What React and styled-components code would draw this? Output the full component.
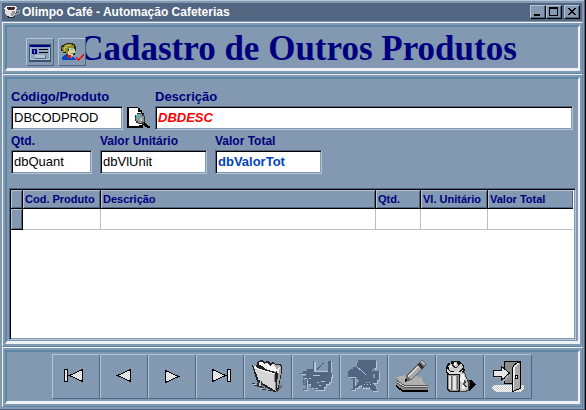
import React from "react";
import styled, { createGlobalStyle } from "styled-components";

const c = {
  face: "#8299b1",
  light: "#b4c6d6",
  dark: "#526581",
  teal: "#5a88a4",
  white: "#eef2f6",
  navy: "#00007f",
};

const GlobalStyle = createGlobalStyle`
  * { box-sizing: border-box; }
  body { margin: 0; background: ${c.face}; font-family: "Liberation Sans", Arial, sans-serif; }
`;

const Window = styled.main`
  min-height: 100vh;
  display: flex;
  flex-direction: column;
  padding: 3px 3px 3px 2px;
  background: ${c.face};
  box-shadow: inset -1px 0 0 #000, inset -2px -1px 0 ${c.dark}, inset 0 1px 0 ${c.light};
`;

const TitleBar = styled.header`
  display: flex;
  align-items: center;
  height: 18px;
  margin: 0 1px 1px 0;
  padding: 0 2px 0 1px;
  background: ${c.dark};
  color: #fff;
`;

const Caption = styled.span`
  flex: 1;
  padding-left: 2px;
  font-size: 12px;
  font-weight: bold;
  line-height: 16px;
  white-space: nowrap;
`;

const WindowButton = styled.button`
  width: 16px;
  height: 14px;
  padding: 0;
  border: 1px solid;
  border-color: ${c.light} #000 #000 ${c.light};
  background: ${c.face};
  box-shadow: inset -1px -1px 0 ${c.dark};
  margin-left: ${(p) => (p.$apart ? "2px" : "0")};
  svg { display: block; }
`;

const Panel = styled.section`
  display: flex;
  flex: ${(p) => (p.$grow ? "1" : "none")};
  padding: 2px;
  border: 1px solid;
  border-color: ${c.white} ${c.teal} ${c.teal} ${c.white};
`;

const Frame = styled.div`
  flex: 1;
  min-width: 0;
  display: flex;
  flex-direction: column;
  border-style: solid;
  border-width: 2px 2px 3px 2px;
  border-color: ${c.teal} ${c.white} ${c.white} ${c.teal};
`;

const Heading = styled(Frame)`
  position: relative;
  height: 46px;
  align-items: center;
  justify-content: center;
`;

const Title = styled.h1`
  margin: 0;
  padding: 2px 0 0 10px;
  color: ${c.navy};
  font-family: "Liberation Serif", "Times New Roman", serif;
  font-size: 35px;
  line-height: 40px;
  font-weight: bold;
  white-space: nowrap;
`;

const HeadingTools = styled.div`
  position: absolute;
  left: 19px;
  top: 11px;
  display: flex;
  gap: 4px;
`;

const RaisedButton = styled.button`
  display: grid;
  place-items: center;
  padding: 0;
  border: 1px solid;
  border-color: ${c.light} ${c.dark} ${c.dark} ${c.light};
  background: ${c.face};
  svg { display: block; }
`;

const SmallButton = styled(RaisedButton)`
  width: 28px;
  height: 28px;
`;

const Body = styled(Frame)`
  padding: 11px 2px 1px 2px;
`;

const Form = styled.form`
  display: flex;
  flex-direction: column;
  gap: 4px;
  padding: 0 3px 0 2px;
`;

const FieldRow = styled.div`
  display: flex;
  align-items: flex-end;
  gap: ${(p) => p.$gap};
`;

const Field = styled.label`
  display: flex;
  flex-direction: column;
  gap: 2px;
  ${(p) => (p.$width ? `width: ${p.$width};` : "flex: 1; min-width: 0;")}
  color: ${c.navy};
  font-size: ${(p) => (p.$small ? "12px" : "13px")};
  line-height: 14px;
  font-weight: bold;
  white-space: nowrap;
`;

const FieldName = styled.span`
  display: block;
`;

const Input = styled.input`
  width: 100%;
  height: 24px;
  padding: 0 2px 1px;
  border: 1px solid;
  border-color: ${c.dark} ${c.light} ${c.light} ${c.dark};
  border-radius: 0;
  outline: none;
  background: #fff;
  box-shadow: inset 1px 1px 0 #000, inset -1px -1px 0 ${c.face};
  color: ${(p) => p.$color || "#000"};
  font-family: "Liberation Sans", Arial, sans-serif;
  font-size: 13px;
  font-weight: ${(p) => (p.$bold ? "bold" : "normal")};
  font-style: ${(p) => (p.$italic ? "italic" : "normal")};
`;

const SearchButton = styled.button`
  width: 26px;
  height: 24px;
  padding: 0;
  border: 0;
  background: none;
  svg { display: block; }
`;

const GridBox = styled.div`
  flex: 1;
  margin-top: 14px;
  padding: 1px 2px 1px 1px;
  border: 1px solid;
  border-color: ${c.dark} ${c.light} ${c.light} ${c.dark};
  background: #fff;
  box-shadow: inset 1px 1px 0 #000, inset -1px -1px 0 ${c.face};
`;

const Table = styled.table`
  width: 100%;
  table-layout: fixed;
  border-collapse: separate;
  border-spacing: 0;
`;

const Col = styled.col`
  width: ${(p) => p.$width || "auto"};
`;

const HeadCell = styled.th`
  height: 19px;
  padding: 0 0 0 2px;
  border-right: ${(p) => (p.$last ? "0" : "1px solid #000")};
  border-bottom: 1px solid #000;
  background: ${c.face};
  box-shadow: inset 1px 1px 0 ${c.light}, inset -1px -1px 0 ${c.dark};
  color: ${c.navy};
  font-size: 11px;
  line-height: 16px;
  text-align: left;
  white-space: nowrap;
`;

const RowMark = styled(HeadCell)`
  height: 21px;
`;

const Cell = styled.td`
  height: 21px;
  padding: 0;
  border-right: ${(p) => (p.$last ? "0" : "1px solid #c0c0c0")};
  border-bottom: 1px solid #c0c0c0;
`;

const Toolbar = styled(Frame)`
  flex-direction: row;
  justify-content: center;
  padding: 2px 2px 2px 0;
`;

const ToolButton = styled(RaisedButton)`
  width: 48px;
  height: 45px;
`;

const Art = ({ w, h, box, children }) => (
  <svg width={w} height={h} viewBox={box || `0 0 ${w} ${h}`} shapeRendering="crispEdges" aria-hidden="true">
    {children}
  </svg>
);

const Tool = ({ name, disabled, children }) => (
  <ToolButton type="button" aria-label={name} disabled={disabled}>
    <Art w={46} h={43} box="1 1 46 43">
      <defs>
        <pattern id="dither" width="2" height="2" patternUnits="userSpaceOnUse">
          <rect width="2" height="2" fill="#fff" />
          <rect width="1" height="1" fill="#c8ccd0" />
          <rect x="1" y="1" width="1" height="1" fill="#c8ccd0" />
        </pattern>
      </defs>
      {children}
    </Art>
  </ToolButton>
);

const arrowStyle = { fill: "url(#dither)", stroke: "#000", strokeWidth: 1 };
const LeftArrow = ({ x }) => <path d={`M${x} 21.5l13-6v12z`} {...arrowStyle} />;
const RightArrow = ({ x, y }) => <path d={`M${x} ${y}l13 6-13 6z`} {...arrowStyle} />;

const CupIcon = () => (
  <Art w={17} h={14}>
    <path d="M2 4h11v3l-2 4-2 1H6l-3-2-1-3z" fill="#ddd" />
    <path d="M1 3l2-2h9l2 2-1 2-3 1H5L2 5z" fill="#eee" />
    <path d="M3 3l2-1h6l1 1-2 2H5z" fill="#432820" />
    <path d="M13 5h3v3l-4 2" fill="none" stroke="#aaa" />
    <path d="M9 6h3v2l-2 3H8z" fill="#9a9490" />
    <path d="M3 11h2l1 1h4l2-1v1l-2 1H5z" fill="#282828" />
  </Art>
);

const CardIcon = () => (
  <Art w={26} h={26}>
    <rect x="2" y="5" width="22" height="18" fill="#395170" />
    <rect x="3" y="6" width="20" height="15" fill="#b4c6d6" />
    <rect x="3" y="6" width="20" height="2" fill="#000080" />
    <rect x="4" y="8" width="18" height="12" fill="#8ba3bb" />
    <path d="M5 10h5v5H5z M7 11v3h1v-3z" fill="#000080" fillRule="evenodd" />
    <path d="M12 10h9v1h-9zM12 13h9v1h-9z" fill="#000" />
    <rect x="8" y="16" width="10" height="3" fill="#b4c6d6" />
    <path d="M8 19h10v-3h1v4H8z" fill="#526581" />
  </Art>
);

const PersonIcon = () => (
  <Art w={26} h={26}>
    <path d="M5 5h2V4h7v1h2v2h1v5h-1v4H7v-2H4v-2H2V7h1V6h2z" fill="#242814" />
    <path d="M5 6h2V5h6v1h2v3h-4v1H9v5H7v-2H4v-2H3V8h2z" fill="#8f8b25" />
    <path d="M7 6h5v1H8v2H6v3H5V8h2z" fill="#c5bd66" />
    <path d="M10 9h5v1h1v4h-2v3H9v-5h1z" fill="#d8d499" />
    <path d="M12 9h2v2h-2zM11 14h3v1h-3z" fill="#7fb7b2" />
    <path d="M3 18l3-2h2l4 3 2-1 3 3H3z" fill="#0047ce" />
    <path d="M8 16h4v2l-1 1v2l-3-3z" fill="#e01515" />
    <path d="M17 18h1v1h1v1h1v-1h1v-1h1v-1h1v-1h1v-1h1v2h-1v1h-1v1h-1v1h-1v1h-1v1h-1v-1h-1v-1h-1z" fill="#ff0000" />
  </Art>
);

const SearchIcon = () => (
  <Art w={26} h={24}>
    <path d="M1 1h11v1h2v2h2v3h2v12h-1v3H1z" fill="#000" />
    <path d="M3 2h9v4h3v2h1v11h-3v1H3z" fill="#fff" />
    <path d="M12 2h1v3h3v1h-4z" fill="#000" />
    <path d="M15 15l3 1 4 4h2v2h-2l-5-3z" fill="#000" />
    <path d="M11 7h5v1h2v2h1v6h-1v2h-6v-1h-2v-2H9V9h2z" fill="#333" />
    <path d="M11 8h5v2h2v6h-2v1h-4v-2h-2V9h1z" fill="#8b9294" />
    <path d="M11 9h3v1h-1v2h-2z" fill="#35c8d0" />
    <path d="M14 12h2v3h-2z" fill="#c0cccc" />
  </Art>
);

const Folder = () => (
  <>
    <path d="M33 30l6 1-1 2-5 5-9-4z" fill="#697582" />
    <path d="M14 7l4-1 2 2 4-1 2 2 4-1 1 2h5l2 2v6l-4 19-4 1-17-10-5-17 4 1z" fill="#222" />
    <path d="M15 8h3l2 2-1 2-4-1z" fill="#f8f8f8" />
    <path d="M18 12l3-3h3l2 3 3-2h2l3 5-2 3-11-3z" fill="#eee" />
    <path d="M21 12l2-2 3 3 4-1 3 4-3 1z" fill="#fff" />
    <path d="M30 11h5l2 2v6l-3 15h-1l1-17z" fill="#aaa" />
    <path d="M33 16l2-3h1l-2 8z" fill="#eee" />
    <path d="M9 11l4 3 17 5 2 18-17-10z" fill="#d6d6d6" />
    <path d="M10 12l4 3 17 5" fill="none" stroke="#fff" />
    <path d="M30 20l2 16" stroke="#888" />
    <path d="M13 29h2v-3h1v6h1v-5h1v6h2v1h-4v-1h-3zM8 29h3v1H8zM10 31h3v1h-3zM21 33h3v1h-3zM18 35h4v1h-4zM24 36h5v1h-5z" fill="#333" />
    <path d="M15 29h1v-2h1v5h-2zM9 30h3v1H9zM16 34h3v1h-3z" fill="#ccc" />
  </>
);

const Embossed = ({ d }) => (
  <>
    <path d={d} fill={c.light} fillRule="evenodd" transform="translate(1 1)" />
    <path d={d} fill={c.dark} fillRule="evenodd" />
  </>
);

const SaveArt = () => (
  <>
    <Embossed d="M21 7h1v11h14V7h3v12h1v4h-1v5h-2v2h-3v3h-2v3H22v-2h-3v-4h-3v-5h-5v-3h3v-2H8v-1h3v-2h4v-2h6z M11 24h4v12h-4z" />
    <path d="M23 8h13v10H23z" fill={c.light} />
    <path d="M24 8h12v9H24z" fill={c.face} />
    <path d="M25 16v-2h1v-1h1v-1h1v-1h1v2h-1v1h-1v1h-1v1zM30 11V9h2v1h-1v1z" fill={c.dark} />
    <path d="M21 21h7v1h-7zM17 24h2v1h-2zM25 28h2v1h-2zM27 31h2v1h-2zM29 27h4v1h-4zM23 34h3v1h-3z" fill={c.light} />
    <path d="M12 25h1v1h-1zM13 26h1v1h-1zM12 27h1v1h-1zM13 28h1v1h-1zM12 29h1v1h-1zM11 31h3v4h-3z" fill={c.face} />
  </>
);

const CancelArt = () => (
  <>
    <Embossed d="M18 6h18v8h-1v3h4v9h-2v3h-6l5 4 1 4h-5l-2-3h-8v-3l-5 3-2-1 4-6-4-4H8v-5l2-3h3v-2h4z M11 24h4v12h-4z" />
    <path d="M17 13l6 5 4 5M35 14l-5 4-4 4-6 7-5 6M26 23l5 5 6 5" fill="none" stroke={c.light} />
    <path d="M16 14l6 5 5 6 9 9M34 13l-6 6-7 9-5 6" fill="none" stroke={c.dark} strokeWidth="2" />
    <path d="M26 28h1v1h-1zM29 28h1v1h-1zM24 30h1v1h-1zM27 30h1v1h-1zM30 30h1v1h-1zM23 33h1v1h-1zM26 33h1v1h-1zM29 33h1v1h-1z" fill={c.light} />
    <path d="M11 25h2v10h-2zM33 20h2v4h-2z" fill={c.face} />
  </>
);

const EditArt = () => (
  <>
    <path d="M8 30l5 5h27v3H15l-7-5z" fill="#000" />
    <path d="M8 23l10-2 17 3 1 5 4 3v4H15l-7-5z" fill="#858585" />
    <path d="M8 23l11-2 15 2 2 6 2 1-1 2H15z" fill="#b0b0b0" />
    <path d="M9 27l7 4h24M9 29l7 4h24" fill="none" stroke="#555" />
    <path d="M9 28l7 4h24" fill="none" stroke="#ccc" />
    <path d="M17 28l1-6 13-14 3-2 4 3v3L23 26z" fill="#666" />
    <path d="M19 22l12-12 4 3-12 12z" fill="#aaa" />
    <path d="M19 22l12-12 1 1-12 12z" fill="#ddd" />
    <path d="M29 11l2-2 5 4-2 2z" fill="#333" />
    <path d="M32 8l2-1 3 3-1 2z" fill="#b8b8b8" />
    <path d="M17 28v-3l3 1z" fill="#000" />
  </>
);

const TrashArt = () => (
  <>
    <path d="M31 26l5 0 4 5-7 6-5 1z" fill="#000" />
    <path d="M22 18h7l2 6 3 4-1 9-5 1h-6z" fill="#444" />
    <path d="M23 19h5l2 5 2 5 0 7-4 1h-5z" fill="#c4c4c4" />
    <path d="M25 20h3l1 5-2 4-3-2zM26 31l2-1 1 5h-3z" fill="#f2f2f2" />
    <path d="M28 25l2 3-1 2 2 3h-2l-3-3 2-2z" fill="#444" />
    <path d="M10 13l2-4 3 1V7h7l3 1 3 4 1 5-5 3v16l-2 2H13l-2-2V20l-1-3z" fill="#111" />
    <path d="M12 12l3-2 2 2 1-4h3l1 4 3-3 2 4-5 5-8-1z" fill="#ccc" />
    <path d="M18 9h2l-1 4zM14 11l2 1-2 3z" fill="#fff" />
    <path d="M16 11l4 3 4-4" fill="none" stroke="#222" />
    <path d="M11 15l4 3h9l3-2-2 4H13l-2-3z" fill="#ddd" />
    <path d="M12 21h11v14l-2 2h-7l-2-2z" fill="#999" />
    <path d="M13 22h2v13h-2zM17 22h3v14h-3z" fill="#e4e4e4" />
    <path d="M15 22h1v14h-1zM21 22h1v13h-1z" fill="#666" />
  </>
);

const ExitArt = () => (
  <>
    <path d="M10 31h30v3l-2 3-3 1H13l-4-2-1-3z" fill="url(#dither)" />
    <path d="M36 9h2v23h-2z" fill="#a0a0a0" />
    <path d="M20.5 7.5h16v22h-16z" fill="#8b8b8b" stroke="#000" />
    <path d="M28.5 13.5l2-3 4-2h2v26l-3 1-5 2z" fill="#a9a9a9" stroke="#000" />
    <path d="M29 14l2-3 3-2h2l-5 4-1 23h-1z" fill="#eee" />
    <path d="M31 21h3v4h-3z" fill="#000" />
    <path d="M32 22h1v2h-1z" fill="#fff" />
    <path d="M10 22h8v5l8-8v2l-8 8h-1v-5h-7z" fill="#a8afb6" />
    <path d="M9.5 16.5h8v-4l8 6.5-8 7v-4h-8z" fill="#e8e8e8" stroke="#111" />
  </>
);

const columns = [
  { name: "Cod. Produto", width: "78px" },
  { name: "Descrição" },
  { name: "Qtd.", width: "45px" },
  { name: "Vl. Unitário", width: "67px" },
  { name: "Valor Total", width: "85px" },
];

export default function App() {
  return (
    <Window>
      <GlobalStyle />
      <TitleBar>
        <CupIcon />
        <Caption>Olimpo Café - Automação Cafeterias</Caption>
        <WindowButton type="button" aria-label="Minimizar">
          <Art w={14} h={12}><path d="M3 8h6v2H3z" /></Art>
        </WindowButton>
        <WindowButton type="button" aria-label="Maximizar">
          <Art w={14} h={12}><path fillRule="evenodd" d="M2 1h9v9H2z M3 3v6h7V3z" /></Art>
        </WindowButton>
        <WindowButton type="button" aria-label="Fechar" $apart>
          <Art w={14} h={12}>
            <path d="M3 2h2v1h1v1h2V3h1V2h2v1h-1v1H9v1H8v1h1v1h1v1h1v1H9V8H8V7H6v1H5v1H3V8h1V7h1V6h1V5H5V4H4V3H3z" />
          </Art>
        </WindowButton>
      </TitleBar>

      <Panel>
        <Heading>
          <Title>Cadastro de Outros Produtos</Title>
          <HeadingTools>
            <SmallButton type="button" aria-label="Ficha"><CardIcon /></SmallButton>
            <SmallButton type="button" aria-label="Usuário"><PersonIcon /></SmallButton>
          </HeadingTools>
        </Heading>
      </Panel>

      <Panel $grow>
        <Body>
          <Form onSubmit={(e) => e.preventDefault()}>
            <FieldRow $gap="3px">
              <Field $width="112px">
                <FieldName>Código/Produto</FieldName>
                <Input defaultValue="DBCODPROD" />
              </Field>
              <SearchButton type="button" aria-label="Procurar"><SearchIcon /></SearchButton>
              <Field>
                <FieldName>Descrição</FieldName>
                <Input defaultValue="DBDESC" $color="#ff0000" $bold $italic />
              </Field>
            </FieldRow>
            <FieldRow $gap="8px">
              <Field $width="81px" $small>
                <FieldName>Qtd.</FieldName>
                <Input defaultValue="dbQuant" />
              </Field>
              <Field $width="107px" $small>
                <FieldName>Valor Unitário</FieldName>
                <Input defaultValue="dbVlUnit" />
              </Field>
              <Field $width="107px" $small>
                <FieldName>Valor Total</FieldName>
                <Input defaultValue="dbValorTot" $color="#0044bb" $bold />
              </Field>
            </FieldRow>
          </Form>
          <GridBox>
            <Table>
              <colgroup>
                <Col $width="12px" />
                {columns.map((col) => <Col key={col.name} $width={col.width} />)}
              </colgroup>
              <thead>
                <tr>
                  <HeadCell />
                  {columns.map((col, i) => (
                    <HeadCell key={col.name} scope="col" $last={i === columns.length - 1}>{col.name}</HeadCell>
                  ))}
                </tr>
              </thead>
              <tbody>
                <tr>
                  <RowMark scope="row" />
                  {columns.map((col, i) => <Cell key={col.name} $last={i === columns.length - 1} />)}
                </tr>
              </tbody>
            </Table>
          </GridBox>
        </Body>
      </Panel>

      <Panel>
        <Toolbar>
          <Tool name="Primeiro"><path d="M12.5 15.5h3v12h-3z" {...arrowStyle} /><LeftArrow x={17.5} /></Tool>
          <Tool name="Anterior"><LeftArrow x={17.5} /></Tool>
          <Tool name="Próximo"><RightArrow x={17.5} y={16.5} /></Tool>
          <Tool name="Último"><RightArrow x={16.5} y={15.5} /><path d="M31.5 15.5h3v12h-3z" {...arrowStyle} /></Tool>
          <Tool name="Novo"><Folder /></Tool>
          <Tool name="Gravar" disabled><SaveArt /></Tool>
          <Tool name="Cancelar" disabled><CancelArt /></Tool>
          <Tool name="Editar"><EditArt /></Tool>
          <Tool name="Excluir"><TrashArt /></Tool>
          <Tool name="Sair"><ExitArt /></Tool>
        </Toolbar>
      </Panel>
    </Window>
  );
}
